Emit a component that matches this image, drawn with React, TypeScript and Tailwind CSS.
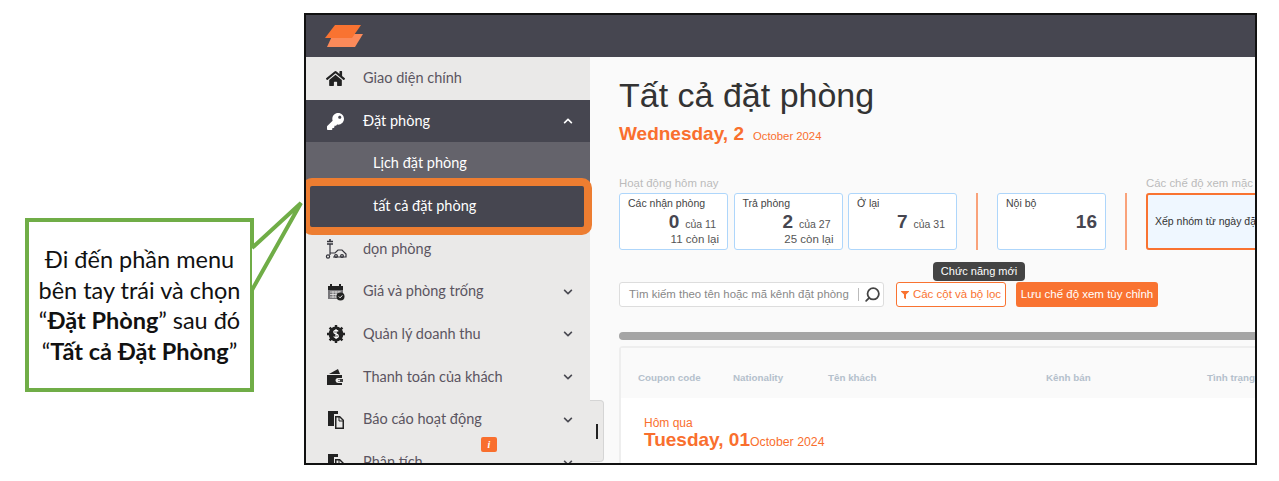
import { FaChevronDown, FaChevronUp, FaFilter, FaHome, FaKey } from "react-icons/fa";
import { FiSearch } from "react-icons/fi";

const CleaningIcon = () => (
  <svg width="22" height="22" viewBox="0 0 22 22" fill="none" stroke="#33333b" strokeWidth="1.2">
    <path d="M5 1v2M2 3.500h6M2 6h6" strokeWidth="1.600" />
    <path d="M5 6v11" />
    <circle cx="3" cy="18.500" r="1.600" />
    <path d="M5 15h5l3-3h4l4 4v3H8" />
    <circle cx="11" cy="18" r="1.400" />
    <circle cx="17" cy="18" r="1.400" />
  </svg>
);

const CalendarIcon = () => (
  <svg width="18" height="18" viewBox="0 0 18 18">
    <path d="M1 3h15v4H1z" fill="#222" />
    <path d="M4 1v3M13 1v3" stroke="#222" strokeWidth="2" />
    <path d="M1 7h15v9H1z" fill="#77767a" />
    <path d="M3 9h11M3 11.500h11M3 14h8M6 8v7M9 8v7M12 8v4" stroke="#eae9e8" strokeWidth=".8" />
    <circle cx="13.500" cy="13.500" r="4" fill="#222" />
    <path d="M11.800 13.500l1.300 1.300 2.200-2.400" stroke="#fff" strokeWidth="1" fill="none" />
  </svg>
);

const RevenueIcon = () => (
  <svg width="18" height="18" viewBox="0 0 18 18">
    <circle cx="9" cy="9" r="7.400" fill="#222" />
    <path d="M9 0v18M0 9h18M2.600 2.600l12.800 12.800M15.400 2.600L2.600 15.400" stroke="#222" strokeWidth="2.400" />
    <path d="M11.200 6.400C10.600 5.600 9.800 5.400 9 5.400c-1.200 0-2.200.6-2.200 1.700C6.800 9.500 11.300 8.300 11.300 10.900c0 1.100-1 1.700-2.300 1.700-.9 0-1.700-.3-2.300-1.100M9 4v10" stroke="#fff" strokeWidth="1.200" fill="none" />
  </svg>
);

const WalletIcon = () => (
  <svg width="17" height="16" viewBox="0 0 17 16">
    <path d="M2 5L11 0l2 5z" fill="#222" />
    <path d="M0 6h15v3h-4a2.500 2.500 0 000 5h4v2H0z" fill="#222" />
    <path d="M11 10h5v3h-5z" fill="#444" />
    <circle cx="12" cy="11.500" r="1" fill="#fff" />
  </svg>
);

const ReportIcon = () => (
  <svg width="18" height="20" viewBox="0 0 18 20">
    <path d="M1 1h10v3H7v12H1z" fill="#222" />
    <path d="M8 6h5l4 4v9H8z" fill="#222" />
    <path d="M9.500 7.500h3l3 3v7h-6z" fill="#eae9e8" />
    <path d="M12 6v5h5" fill="none" stroke="#222" />
  </svg>
);

type MenuItem = { label: string; icon: React.ReactNode; chevron?: boolean };

const topItems: MenuItem[] = [
  { label: "dọn phòng", icon: <CleaningIcon /> },
  { label: "Giá và phòng trống", icon: <CalendarIcon />, chevron: true },
  { label: "Quản lý doanh thu", icon: <RevenueIcon />, chevron: true },
  { label: "Thanh toán của khách", icon: <WalletIcon />, chevron: true },
  { label: "Báo cáo hoạt động", icon: <ReportIcon />, chevron: true },
  { label: "Phân tích", icon: <ReportIcon />, chevron: true },
];

function SideRow({ label, icon, chevron }: MenuItem) {
  return (
    <div className="flex h-[42.7px] shrink-0 items-center text-[#5b5561]">
      <div className="flex w-[57px] justify-center pl-[2px]">{icon}</div>
      <span className="flex-1 pb-[1px]">{label}</span>
      {chevron && <FaChevronDown size={10} className="mr-[17px] text-[#4a4a52]" />}
    </div>
  );
}

function StatCard({ title, value, of, left }: { title: string; value: string; of?: string; left?: string }) {
  return (
    <div className="h-[57px] w-[109px] shrink-0 rounded-[3px] border border-[#aed6fb] bg-white px-2 pt-[2px] text-[#444]">
      <div className="text-[10.5px] leading-[14px]">{title}</div>
      <div className={`mt-[2px] flex items-baseline justify-end leading-[20px] ${of ? "pr-[3px]" : ""}`}>
        <span className="text-[19px] font-bold text-[#464650]">{value}</span>
        {of && <span className="ml-[6px] text-[10.5px] text-[#555]">{of}</span>}
      </div>
      {left && <div className="mt-[-3px] text-right text-[11.5px] leading-[16px] text-[#555]">{left}</div>}
    </div>
  );
}

export default function App() {
  return (
    <div className="flex h-[481px] w-[1279px] overflow-hidden bg-white font-['Liberation_Sans',sans-serif]">
      {/* chú thích bên trái */}
      <div className="relative w-[304px] shrink-0">
        <div className="absolute left-[25px] top-[218px] flex h-[174px] w-[229px] items-center justify-center whitespace-nowrap border-4 border-[#70ad47] bg-white text-center font-['Lato',sans-serif] text-[23.5px] leading-[30.5px] text-[#111]">
          <div>
            Đi đến phần menu
            <br />
            bên tay trái và chọn
            <br />“<b>Đặt Phòng</b>” sau đó
            <br />“<b>Tất cả Đặt Phòng</b>”
          </div>
        </div>
        <svg className="absolute left-[248px] top-[198px]" width="60" height="100" viewBox="0 0 60 100">
          <path d="M4 50L53 5L4 92" fill="#fff" stroke="#70ad47" strokeWidth="4" />
        </svg>
      </div>

      {/* ảnh chụp màn hình */}
      <div className="mt-[13px] flex h-[452px] w-[953px] shrink-0 flex-col overflow-hidden border-2 border-[#111]">
        <div className="flex h-[42px] shrink-0 items-center bg-[#464650] pl-[19px] pt-[2px]">
          <svg width="40" height="24" viewBox="0 0 40 24">
            <path d="M2 22L8 9H38L30 22z" fill="#fb8a5a" />
            <path d="M0 13L10 0H36L27 13z" fill="#f97331" />
          </svg>
        </div>

        <div className="flex min-h-0 flex-1">
          <aside className="relative flex w-[284px] shrink-0 flex-col bg-[#eae9e8] font-['Lato',sans-serif] text-[14.5px]">
            <SideRow label="Giao diện chính" icon={<FaHome size={19} color="#222" />} />
            <div className="flex h-[42.7px] shrink-0 items-center bg-[#464650] text-white">
              <div className="flex w-[57px] justify-center pl-[2px]">
                <FaKey size={17} />
              </div>
              <span className="flex-1 pb-[1px]">Đặt phòng</span>
              <FaChevronUp size={10} className="mr-[17px]" />
            </div>
            <div className="flex h-[42.7px] shrink-0 items-center bg-[#64636b] pb-[1px] pl-[67px] text-white">Lịch đặt phòng</div>
            <div className="relative flex h-[42.7px] shrink-0 items-center bg-[#464650] pb-[1px] pl-[67px] text-white">
              tất cả đặt phòng
              <div className="absolute left-[-4px] right-[-2px] top-[-7px] bottom-[-7px] rounded-[10px] border-8 border-[#ed7d31]" />
            </div>
            {topItems.map((item) => (
              <SideRow key={item.label} {...item} />
            ))}
            <div className="absolute left-[175px] top-[380px] flex h-[15px] w-[16px] items-center justify-center rounded-[2px] bg-[#f96f2e] font-['Liberation_Serif',serif] text-[10px] font-bold italic text-white">
              i
            </div>
            <div className="absolute left-[284px] top-[343px] flex h-[62px] w-[14px] items-center justify-center rounded-r-[4px] border border-l-0 border-[#d5d5d5] bg-[#eae9e8]">
              <div className="h-[15px] w-[2px] bg-[#222]" />
            </div>
          </aside>

          <main className="flex min-w-0 flex-1 flex-col overflow-hidden bg-[#fafafa] pl-[29px]">
            <h1 className="mt-[14px] whitespace-nowrap text-[34px] leading-[48px] text-[#333]">Tất cả đặt phòng</h1>
            <div className="mt-[3px] flex items-baseline whitespace-nowrap text-[#f96f2e]">
              <span className="text-[19px] font-bold leading-[24px]">Wednesday, 2</span>
              <span className="ml-[9px] text-[11.3px]">October 2024</span>
            </div>

            <div className="mt-[28px] flex w-[800px] items-start">
              <div className="shrink-0">
                <div className="text-[11.4px] leading-[19px] text-[#bbb]">Hoạt động hôm nay</div>
                <div className="flex gap-[5.5px]">
                  <StatCard title="Các nhận phòng" value="0" of="của 11" left="11 còn lại" />
                  <StatCard title="Trả phòng" value="2" of="của 27" left="25 còn lại" />
                  <StatCard title="Ở lại" value="7" of="của 31" />
                </div>
              </div>
              <div className="ml-[19px] mt-[19px] h-[57px] w-[2px] shrink-0 bg-[#f9a27a]" />
              <div className="ml-[19px] mt-[19px] shrink-0">
                <StatCard title="Nội bộ" value="16" />
              </div>
              <div className="ml-[19px] mt-[19px] h-[57px] w-[2px] shrink-0 bg-[#f9a27a]" />
              <div className="ml-[19px] shrink-0">
                <div className="whitespace-nowrap text-[11.4px] leading-[19px] text-[#bbb]">Các chế độ xem mặc định</div>
                <div className="flex h-[57px] w-[200px] items-center whitespace-nowrap rounded-[3px] border-2 border-[#f97331] bg-[#eff7ff] pl-[7px] pt-[1px] text-[10.5px] text-[#333]">
                  Xếp nhóm từ ngày đặt phòng
                </div>
              </div>
            </div>

            <div className="mt-[32px] flex h-[25px] items-stretch whitespace-nowrap">
              <div className="flex w-[265px] items-center rounded-[3px] border border-[#ddd] bg-white pl-[9px] text-[11.4px] text-[#888]">
                <span className="flex-1">Tìm kiếm theo tên hoặc mã kênh đặt phòng</span>
                <span className="mr-[5px] h-[13px] w-px bg-[#bbb]" />
                <FiSearch size={17} className="mr-[2px] -scale-x-100 text-[#444]" strokeWidth={2.5} />
              </div>
              <div className="relative ml-[12px] flex w-[110px] items-center justify-center gap-[4px] rounded-[3px] border border-[#f97331] bg-white text-[11.5px] text-[#f97331]">
                <FaFilter size={8} />
                Các cột và bộ lọc
                <div className="absolute left-[36px] top-[-21px] flex h-[19px] w-[92px] items-center justify-center rounded-[4px] bg-[#444] text-[11px] text-white">
                  Chức năng mới
                </div>
              </div>
              <div className="ml-[10px] flex w-[142px] items-center justify-center rounded-[3px] bg-[#f97331] text-[11.5px] text-white">
                Lưu chế độ xem tùy chỉnh
              </div>
            </div>

            <div className="mt-[25px] h-[8px] w-[700px] shrink-0 rounded-l-full bg-[#a5a5a5]" />

            <div className="mt-[6px] w-[700px] flex-1 rounded-t-[4px] border-2 border-b-0 border-[#eeeeee] bg-white">
              <div className="flex h-[50px] items-end whitespace-nowrap bg-[#fafafa] pb-[12px] text-[9.8px] font-bold text-[#b4c0cc]">
                <span className="ml-[17px] w-[95px]">Coupon code</span>
                <span className="w-[95px]">Nationality</span>
                <span className="w-[218px]">Tên khách</span>
                <span className="w-[161px]">Kênh bán</span>
                <span>Tình trạng</span>
              </div>
              <div className="pl-[23px] pt-[18px] text-[#f96f2e]">
                <div className="text-[12px] leading-[14px]">Hôm qua</div>
                <div className="flex items-baseline whitespace-nowrap">
                  <span className="text-[19px] font-bold leading-[20px]">Tuesday, 01</span>
                  <span className="text-[12.3px]">October 2024</span>
                </div>
              </div>
            </div>
          </main>
        </div>
      </div>
    </div>
  );
}
